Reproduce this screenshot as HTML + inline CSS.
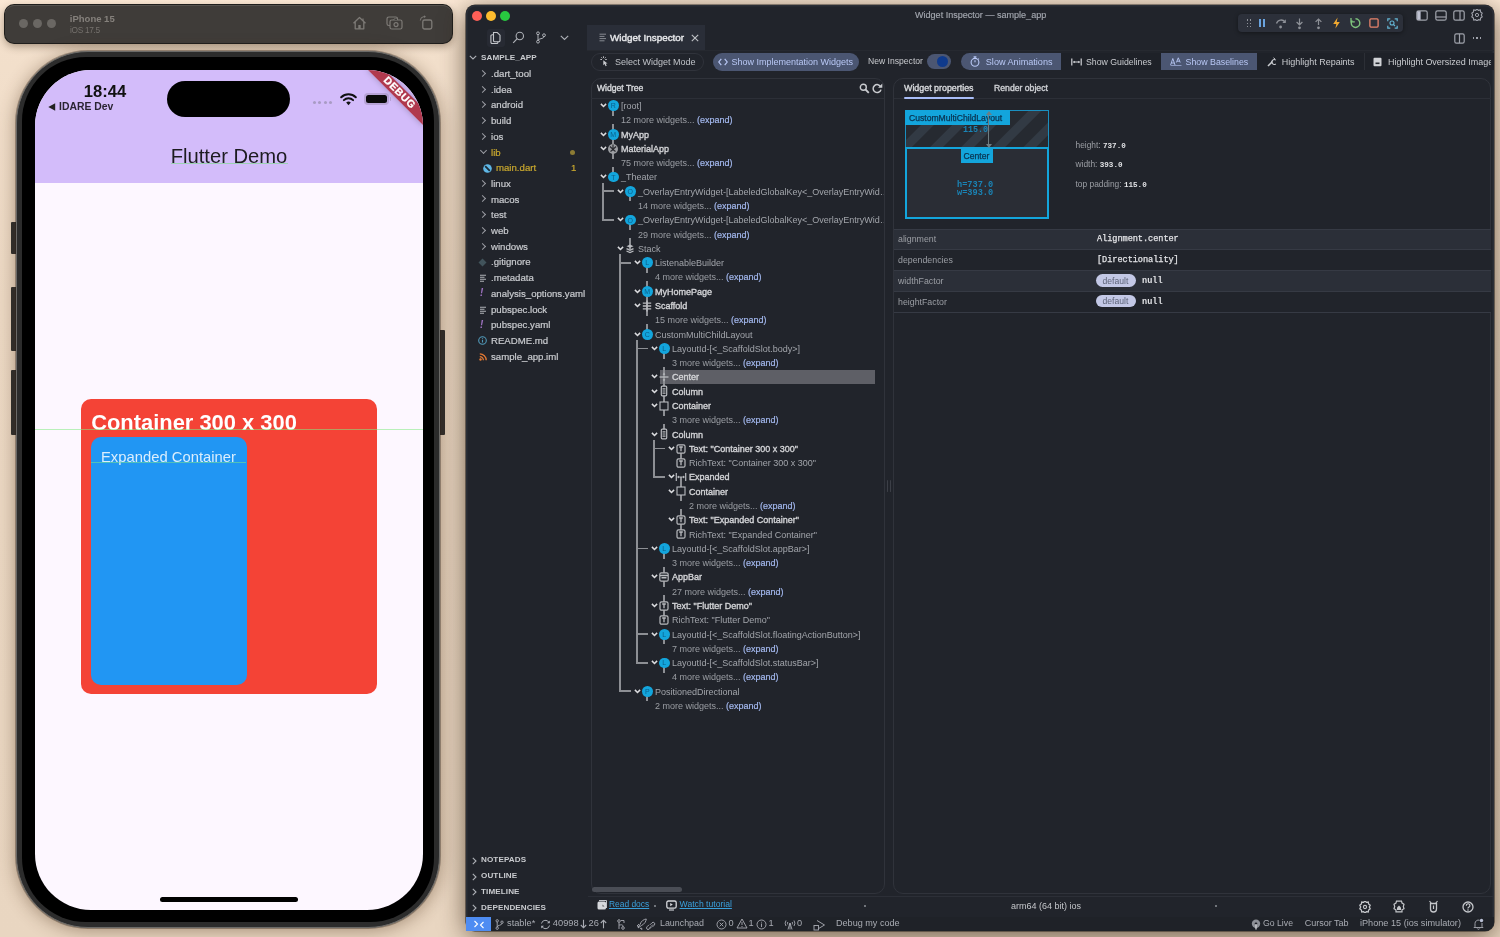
<!DOCTYPE html>
<html><head><meta charset="utf-8">
<style>
*{margin:0;padding:0;box-sizing:border-box}
html,body{width:1500px;height:937px;overflow:hidden}
body{position:relative;background:linear-gradient(180deg,#fbe8d5 0px,#f3e0cc 30px,#ecd9c4 300px,#e9d6c1 100%);font-family:"Liberation Sans",sans-serif}
.a{position:absolute}
.t{position:absolute;white-space:nowrap;line-height:1}
/* simulator */
#simbar{left:4.8px;top:4.8px;width:447.5px;height:38px;background:#3f3c39;border-radius:9px;box-shadow:0 0 0 1px #1f1e1c,inset 0 1px 0 #55524e,0 3px 9px rgba(60,40,20,.45)}
.sdot{width:9px;height:9px;border-radius:50%;background:#6a6763;top:19px}
#phone{left:16px;top:51px;width:424px;height:877px;border-radius:72px;background:#2c2c2c;border:1px solid #6b6a68;box-shadow:0 0 0 1px rgba(40,30,20,.35),0 2px 18px rgba(70,45,20,.45)}
#bezel{left:22px;top:57px;width:412px;height:865px;border-radius:64px;background:#000}
#screen{left:35px;top:69.5px;width:388px;height:840.5px;border-radius:56px;background:#fdf7ff;overflow:hidden}
.btn{background:#2e2e2e;border-radius:1px}
/* vscode */
#vs{left:466px;top:5px;width:1028px;height:926px;background:#21242b;border-radius:9px;overflow:hidden;box-shadow:inset 0 0 0 1.5px #2b2f37,0 0 0 0.6px rgba(0,0,0,.7),0 5px 26px rgba(45,28,10,.65)}
.tl{width:10px;height:10px;border-radius:50%;top:5.7px}

.vt{position:absolute;white-space:nowrap;line-height:1;color:#cfd1d5}
.pill{position:absolute;border-radius:10px}
.panel{position:absolute;border:1px solid #30333b;border-radius:10px}
.ex{font-size:9.65px;color:#c9cbcf;-webkit-text-stroke-width:0.2px}
.chev{position:absolute;width:5px;height:5px;border-right:1.2px solid #9a9da3;border-bottom:1.2px solid #9a9da3}
.sec{font-size:8.1px;font-weight:bold;color:#c9cbcf;letter-spacing:.1px}
.tr{font-size:9px}
</style></head>
<body><div id="root" style="position:absolute;left:0;top:0;width:1500px;height:937px;will-change:transform">
<!-- simulator toolbar -->
<div id="simbar" class="a">
  <div class="a sdot" style="left:14px;top:14px"></div>
  <div class="a sdot" style="left:28.3px;top:14px"></div>
  <div class="a sdot" style="left:42.5px;top:14px"></div>
  <div class="t" style="left:65px;top:9px;font-size:9.5px;font-weight:bold;color:#85817c">iPhone 15</div>
  <div class="t" style="left:65.2px;top:20.8px;font-size:8.3px;color:#75716d;letter-spacing:-0.3px">iOS 17.5</div>
</div>

<!-- phone -->
<div class="a btn" style="left:11px;top:222px;width:6px;height:32px"></div>
<div class="a btn" style="left:11px;top:287px;width:6px;height:64px"></div>
<div class="a btn" style="left:11px;top:370px;width:6px;height:65px"></div>
<div class="a btn" style="left:439px;top:330px;width:6px;height:105px"></div>
<div id="phone" class="a"></div>
<div id="bezel" class="a"></div>
<div id="screen" class="a">
  <div class="a" style="left:0;top:0;width:388px;height:113.9px;background:#d3bcfa"></div>
  <div class="t" style="left:48.7px;top:14.5px;font-size:16.6px;font-weight:bold;color:#111">18:44</div>
  <svg class="a" style="left:12.5px;top:33.3px" width="8" height="8" viewBox="0 0 8 8"><path d="M0.3 4L7.2 0.3V7.7Z" fill="#222"/></svg>
  <div class="t" style="left:24px;top:32.3px;font-size:10.4px;font-weight:bold;color:#2a2433">IDARE Dev</div>
  <div class="a" style="left:132px;top:11.8px;width:123px;height:35.6px;border-radius:18px;background:#000"></div>
  <div class="a" style="left:278px;top:31.8px;width:3.2px;height:3.2px;border-radius:50%;background:#a99bc4"></div>
  <div class="a" style="left:283.3px;top:31.8px;width:3.2px;height:3.2px;border-radius:50%;background:#a99bc4"></div>
  <div class="a" style="left:288.6px;top:31.8px;width:3.2px;height:3.2px;border-radius:50%;background:#a99bc4"></div>
  <div class="a" style="left:293.9px;top:31.8px;width:3.2px;height:3.2px;border-radius:50%;background:#a99bc4"></div>
  <svg class="a" style="left:304.5px;top:23px" width="17" height="13" viewBox="0 0 17 13"><path d="M8.5 12.2L6.2 9.6A3.3 3.3 0 0 1 10.8 9.6Z" fill="#111"/><path d="M3.9 7.1A6.5 6.5 0 0 1 13.1 7.1M1.2 4.2A10.4 10.4 0 0 1 15.8 4.2" stroke="#111" stroke-width="2" fill="none" stroke-linecap="round"/></svg>
  <div class="a" style="left:329px;top:23px;width:24.5px;height:12.5px;border-radius:4px;background:#b7a3d6"></div>
  <div class="a" style="left:331px;top:25.3px;width:20.5px;height:8px;border-radius:2.5px;background:#0a0a0a"></div>
  <div class="a" style="left:354.5px;top:27.3px;width:1.5px;height:4px;border-radius:1px;background:#b7a3d6"></div>
  <div class="t" style="left:0;top:76.4px;width:388px;text-align:center;font-size:20.2px;color:#1d1b20">Flutter Demo</div>
  <div class="a" style="left:136px;top:93.8px;width:116.5px;height:1px;background:#8fd6a3;opacity:.8"></div>
  <div class="a" style="left:45.8px;top:329.5px;width:296.2px;height:295.4px;border-radius:10px;background:#f44336"></div>
  <div class="t" style="left:56.2px;top:342.4px;font-size:21.9px;font-weight:bold;color:#fff">Container 300 x 300</div>
  <div class="a" style="left:56px;top:367.9px;width:155.8px;height:247.4px;border-radius:10px;background:#2196f3"></div>
  <div class="t" style="left:66px;top:380.6px;font-size:14.8px;color:#dbeefd">Expanded Container</div>
  <div class="a" style="left:0;top:359.5px;width:388px;height:1px;background:rgba(130,235,130,.55)"></div>
  <div class="a" style="left:56px;top:392px;width:155px;height:1px;background:rgba(130,235,130,.5)"></div>
  <div class="a" style="left:125px;top:827.8px;width:138px;height:4.6px;border-radius:3px;background:#000"></div>
  <div class="a" style="left:324.8px;top:17.8px;width:79px;height:11.8px;background:rgba(168,28,40,.82);transform:rotate(45deg);box-shadow:0 0 6px rgba(0,0,0,.25);text-align:center;color:#fff;font-size:10.4px;font-weight:bold;line-height:11.8px;letter-spacing:.6px;-webkit-text-stroke:0.3px #fff">DEBUG</div>
</div>

<!-- vscode window -->
<div id="vs" class="a">
  <div class="a tl" style="left:5.5px;background:#fe5f57"></div>
  <div class="a tl" style="left:19.5px;background:#febc2e"></div>
  <div class="a tl" style="left:33.5px;background:#28c840"></div>
</div>

<!-- title -->
<div class="vt" style="left:915px;top:10.5px;font-size:9.05px;color:#a3a7af;-webkit-text-stroke:0.15px #a3a7af">Widget Inspector — sample_app</div>
<!-- debug toolbar -->
<div class="a" style="left:1238px;top:13.5px;width:165px;height:18.5px;background:#2c303a;border-radius:4px;box-shadow:0 1px 4px rgba(0,0,0,.4)"></div>
<!-- sidebar header icons -->
<div class="a" style="left:487px;top:28.5px;width:17.5px;height:18.5px;background:#272a33;border-radius:3px"></div>
<!-- tab -->
<div class="a" style="left:587px;top:25px;width:118px;height:25.5px;background:#2a2e38"></div>
<div class="vt" style="left:610px;top:32.5px;font-size:9.9px;color:#e6e7ea;-webkit-text-stroke:0.4px #e6e7ea">Widget Inspector</div>
<svg class="a" style="left:691px;top:34px" width="8" height="8" viewBox="0 0 8 8"><path d="M0.8 0.8L7.2 7.2M7.2 0.8L0.8 7.2" stroke="#c0c2c6" stroke-width="1.1"/></svg>
<!-- line under tab bar -->
<div class="a" style="left:587px;top:50px;width:907px;height:1px;background:#262930"></div>
<!-- explorer -->
<div class="vt sec" style="left:481px;top:54px">SAMPLE_APP</div>
<!-- toolbar pills -->
<div class="pill" style="left:591px;top:52.5px;width:113px;height:18px;border:1px solid #30333b"></div>
<div class="vt" style="left:615px;top:57.8px;font-size:9px;color:#bfc2c7">Select Widget Mode</div>
<div class="pill" style="left:713px;top:52.5px;width:146px;height:18px;background:#4b5672"></div>
<div class="vt" style="left:731.5px;top:57.8px;font-size:9px;color:#b9c8f5">Show Implementation Widgets</div>
<div class="vt" style="left:868px;top:56.5px;font-size:8.6px;color:#c9cbcf">New Inspector</div>
<div class="pill" style="left:926.5px;top:54px;width:24px;height:15px;background:#4b5672;border-radius:8px"></div>
<div class="a" style="left:937px;top:56px;width:11px;height:11px;border-radius:50%;background:#0f3a8c"></div>
<div class="a" style="left:961px;top:52.5px;width:200px;height:17.5px;border-radius:9px 0 0 9px;background:#1e2128;overflow:hidden"></div>
<div class="a" style="left:961px;top:52.5px;width:100px;height:17.5px;border-radius:9px 0 0 9px;background:#4b5672"></div>
<div class="a" style="left:1160.5px;top:52.5px;width:96.5px;height:17.5px;background:#4b5672"></div>
<div class="a" style="left:1257px;top:52.5px;width:237px;height:17.5px;background:#1e2128"></div>
<div class="a" style="left:1364px;top:52.5px;width:1px;height:17.5px;background:#2c2f36"></div>
<div class="vt" style="left:985.8px;top:57.8px;font-size:9.1px;color:#b9c8f5">Slow Animations</div>
<div class="vt" style="left:1086px;top:57.8px;font-size:8.75px;color:#c9cbcf">Show Guidelines</div>
<div class="vt" style="left:1185.6px;top:57.8px;font-size:8.8px;color:#b9c8f5">Show Baselines</div>
<div class="vt" style="left:1281.8px;top:57.8px;font-size:8.97px;color:#c9cbcf">Highlight Repaints</div>
<div class="a" style="left:1380px;top:52px;width:111px;height:18px;overflow:hidden"><div class="vt" style="left:8px;top:5.8px;font-size:8.97px;color:#c9cbcf">Highlight Oversized Images</div></div>
<!-- panels -->
<div class="panel" style="left:590.5px;top:78px;width:294px;height:816px"></div>
<div class="a" style="left:591px;top:98px;width:293px;height:1px;background:#2c2f37"></div>
<div class="vt" style="left:597px;top:84px;font-size:8.6px;color:#d9dbde;-webkit-text-stroke:0.35px #d9dbde">Widget Tree</div>
<div class="panel" style="left:892.8px;top:78px;width:598.7px;height:816px"></div>
<div class="a" style="left:894px;top:98px;width:597px;height:1px;background:#2c2f37"></div>
<div class="vt" style="left:904px;top:83.5px;font-size:8.9px;color:#d9dbde;-webkit-text-stroke:0.35px #d9dbde">Widget properties</div>
<div class="a" style="left:904px;top:96.5px;width:70px;height:2px;background:#a9bdf8;border-radius:1px"></div>
<div class="vt" style="left:994px;top:83.5px;font-size:8.67px;color:#d0d2d6;-webkit-text-stroke:0.35px #d0d2d6">Render object</div>
<!-- tree -->
<div class="a" style="left:591px;top:99px;width:293px;height:795px;overflow:hidden"><div class="a" style="left:-591px;top:-99px;width:1500px;height:937px">
<div class="a" style="left:659.6px;top:369.9px;width:215.6px;height:14.3px;background:#5e5f66"></div>
<div class="a" style="left:612.4px;top:105.6px;width:1.8px;height:10.0px;background:#8d8f94"></div>
<div class="a" style="left:612.4px;top:123.7px;width:1.8px;height:10.5px;background:#8d8f94"></div>
<div class="a" style="left:612.4px;top:134.2px;width:1.8px;height:14.3px;background:#8d8f94"></div>
<div class="a" style="left:612.4px;top:148.5px;width:1.8px;height:10.0px;background:#8d8f94"></div>
<div class="a" style="left:612.4px;top:166.5px;width:1.8px;height:10.5px;background:#8d8f94"></div>
<div class="a" style="left:629.4px;top:191.3px;width:1.8px;height:10.0px;background:#8d8f94"></div>
<div class="a" style="left:629.4px;top:219.9px;width:1.8px;height:10.0px;background:#8d8f94"></div>
<div class="a" style="left:629.4px;top:238.0px;width:1.8px;height:10.5px;background:#8d8f94"></div>
<div class="a" style="left:646.4px;top:262.7px;width:1.8px;height:10.0px;background:#8d8f94"></div>
<div class="a" style="left:646.4px;top:280.8px;width:1.8px;height:10.5px;background:#8d8f94"></div>
<div class="a" style="left:646.4px;top:291.3px;width:1.8px;height:14.3px;background:#8d8f94"></div>
<div class="a" style="left:646.4px;top:305.6px;width:1.8px;height:10.0px;background:#8d8f94"></div>
<div class="a" style="left:646.4px;top:323.7px;width:1.8px;height:10.5px;background:#8d8f94"></div>
<div class="a" style="left:663.4px;top:348.5px;width:1.8px;height:10.0px;background:#8d8f94"></div>
<div class="a" style="left:663.4px;top:366.5px;width:1.8px;height:10.5px;background:#8d8f94"></div>
<div class="a" style="left:663.4px;top:377.0px;width:1.8px;height:14.3px;background:#8d8f94"></div>
<div class="a" style="left:663.4px;top:391.3px;width:1.8px;height:14.3px;background:#8d8f94"></div>
<div class="a" style="left:663.4px;top:405.6px;width:1.8px;height:10.0px;background:#8d8f94"></div>
<div class="a" style="left:663.4px;top:423.7px;width:1.8px;height:10.5px;background:#8d8f94"></div>
<div class="a" style="left:680.4px;top:448.5px;width:1.8px;height:14.3px;background:#8d8f94"></div>
<div class="a" style="left:680.4px;top:477.0px;width:1.8px;height:14.3px;background:#8d8f94"></div>
<div class="a" style="left:680.4px;top:491.3px;width:1.8px;height:10.0px;background:#8d8f94"></div>
<div class="a" style="left:680.4px;top:509.4px;width:1.8px;height:10.5px;background:#8d8f94"></div>
<div class="a" style="left:680.4px;top:519.9px;width:1.8px;height:14.3px;background:#8d8f94"></div>
<div class="a" style="left:663.4px;top:548.5px;width:1.8px;height:10.0px;background:#8d8f94"></div>
<div class="a" style="left:663.4px;top:566.6px;width:1.8px;height:10.5px;background:#8d8f94"></div>
<div class="a" style="left:663.4px;top:577.0px;width:1.8px;height:10.0px;background:#8d8f94"></div>
<div class="a" style="left:663.4px;top:595.1px;width:1.8px;height:10.5px;background:#8d8f94"></div>
<div class="a" style="left:663.4px;top:605.6px;width:1.8px;height:14.3px;background:#8d8f94"></div>
<div class="a" style="left:663.4px;top:634.2px;width:1.8px;height:10.0px;background:#8d8f94"></div>
<div class="a" style="left:663.4px;top:662.8px;width:1.8px;height:10.0px;background:#8d8f94"></div>
<div class="a" style="left:646.4px;top:691.3px;width:1.8px;height:10.0px;background:#8d8f94"></div>
<div class="a" style="left:602.3px;top:182.5px;width:1.8px;height:38.3px;background:#8d8f94"></div>
<div class="a" style="left:602.3px;top:190.4px;width:11.5px;height:1.8px;background:#8d8f94"></div>
<div class="a" style="left:602.3px;top:219.0px;width:11.5px;height:1.8px;background:#8d8f94"></div>
<div class="a" style="left:619.3px;top:254.0px;width:1.8px;height:438.3px;background:#8d8f94"></div>
<div class="a" style="left:619.3px;top:261.8px;width:11.5px;height:1.8px;background:#8d8f94"></div>
<div class="a" style="left:619.3px;top:690.4px;width:11.5px;height:1.8px;background:#8d8f94"></div>
<div class="a" style="left:636.3px;top:339.7px;width:1.8px;height:324.0px;background:#8d8f94"></div>
<div class="a" style="left:636.3px;top:347.6px;width:11.5px;height:1.8px;background:#8d8f94"></div>
<div class="a" style="left:636.3px;top:547.6px;width:11.5px;height:1.8px;background:#8d8f94"></div>
<div class="a" style="left:636.3px;top:633.3px;width:11.5px;height:1.8px;background:#8d8f94"></div>
<div class="a" style="left:636.3px;top:661.9px;width:11.5px;height:1.8px;background:#8d8f94"></div>
<div class="a" style="left:653.3px;top:439.7px;width:1.8px;height:38.3px;background:#8d8f94"></div>
<div class="a" style="left:653.3px;top:447.6px;width:11.5px;height:1.8px;background:#8d8f94"></div>
<div class="a" style="left:653.3px;top:476.1px;width:11.5px;height:1.8px;background:#8d8f94"></div>
<svg class="a" style="left:599.7px;top:103.0px" width="7" height="5" viewBox="0 0 7 5"><path d="M0.9 0.9L3.5 3.5L6.1 0.9" stroke="#dcdde0" stroke-width="1.5" fill="none"/></svg>
<div class="a" style="left:608.2px;top:100.3px;width:10.8px;height:10.8px;border-radius:50%;background:#13a5dc"></div><div class="vt" style="left:608.1px;top:102.2px;width:10.4px;text-align:center;font-size:7px;color:#0b5f8a">R</div>
<div class="vt tr" style="left:621.0px;top:102.0px;color:#a2a5ab;font-weight:normal">[root]</div>
<div class="vt tr" style="left:621.0px;top:116.3px;color:#9b9ea4">12 more widgets... <span style="color:#a3b8ee;-webkit-text-stroke:0.2px #a3b8ee">(expand)</span></div>
<svg class="a" style="left:599.7px;top:131.6px" width="7" height="5" viewBox="0 0 7 5"><path d="M0.9 0.9L3.5 3.5L6.1 0.9" stroke="#dcdde0" stroke-width="1.5" fill="none"/></svg>
<div class="a" style="left:608.2px;top:128.9px;width:10.8px;height:10.8px;border-radius:50%;background:#13a5dc"></div><div class="vt" style="left:608.1px;top:130.8px;width:10.4px;text-align:center;font-size:7px;color:#0b5f8a">M</div>
<div class="vt tr" style="left:621.0px;top:130.6px;color:#d3d4d7;font-weight:normal;-webkit-text-stroke:0.35px #d3d4d7">MyApp</div>
<svg class="a" style="left:599.7px;top:145.9px" width="7" height="5" viewBox="0 0 7 5"><path d="M0.9 0.9L3.5 3.5L6.1 0.9" stroke="#dcdde0" stroke-width="1.5" fill="none"/></svg>
<svg class="a" style="left:607.3px;top:142.5px" width="12" height="12" viewBox="0 0 12 12"><circle cx="6" cy="6" r="5" fill="#9c9ea2"/><path d="M6 1.5V5M3 3.5L5 5.5M9 3.5L7 5.5M3.5 8.5L6 6.5L8.5 8.5" stroke="#2a2c31" stroke-width="1.2" fill="none"/><circle cx="6" cy="6" r="1.2" fill="#2a2c31"/></svg>
<div class="vt tr" style="left:621.0px;top:144.9px;color:#d3d4d7;font-weight:normal;-webkit-text-stroke:0.35px #d3d4d7">MaterialApp</div>
<div class="vt tr" style="left:621.0px;top:159.1px;color:#9b9ea4">75 more widgets... <span style="color:#a3b8ee;-webkit-text-stroke:0.2px #a3b8ee">(expand)</span></div>
<svg class="a" style="left:599.7px;top:174.4px" width="7" height="5" viewBox="0 0 7 5"><path d="M0.9 0.9L3.5 3.5L6.1 0.9" stroke="#dcdde0" stroke-width="1.5" fill="none"/></svg>
<div class="a" style="left:608.2px;top:171.7px;width:10.8px;height:10.8px;border-radius:50%;background:#13a5dc"></div><div class="vt" style="left:608.1px;top:173.6px;width:10.4px;text-align:center;font-size:7px;color:#0b5f8a">T</div>
<div class="vt tr" style="left:621.0px;top:173.4px;color:#a2a5ab;font-weight:normal">_Theater</div>
<svg class="a" style="left:616.7px;top:188.7px" width="7" height="5" viewBox="0 0 7 5"><path d="M0.9 0.9L3.5 3.5L6.1 0.9" stroke="#dcdde0" stroke-width="1.5" fill="none"/></svg>
<div class="a" style="left:625.2px;top:186.0px;width:10.8px;height:10.8px;border-radius:50%;background:#13a5dc"></div><div class="vt" style="left:625.1px;top:187.9px;width:10.4px;text-align:center;font-size:7px;color:#0b5f8a">O</div>
<div class="vt tr" style="left:638.0px;top:187.7px;color:#a2a5ab;font-weight:normal">_OverlayEntryWidget-[LabeledGlobalKey&lt;_OverlayEntryWid…</div>
<div class="vt tr" style="left:638.0px;top:202.0px;color:#9b9ea4">14 more widgets... <span style="color:#a3b8ee;-webkit-text-stroke:0.2px #a3b8ee">(expand)</span></div>
<svg class="a" style="left:616.7px;top:217.3px" width="7" height="5" viewBox="0 0 7 5"><path d="M0.9 0.9L3.5 3.5L6.1 0.9" stroke="#dcdde0" stroke-width="1.5" fill="none"/></svg>
<div class="a" style="left:625.2px;top:214.6px;width:10.8px;height:10.8px;border-radius:50%;background:#13a5dc"></div><div class="vt" style="left:625.1px;top:216.5px;width:10.4px;text-align:center;font-size:7px;color:#0b5f8a">O</div>
<div class="vt tr" style="left:638.0px;top:216.3px;color:#a2a5ab;font-weight:normal">_OverlayEntryWidget-[LabeledGlobalKey&lt;_OverlayEntryWid…</div>
<div class="vt tr" style="left:638.0px;top:230.6px;color:#9b9ea4">29 more widgets... <span style="color:#a3b8ee;-webkit-text-stroke:0.2px #a3b8ee">(expand)</span></div>
<svg class="a" style="left:616.7px;top:245.9px" width="7" height="5" viewBox="0 0 7 5"><path d="M0.9 0.9L3.5 3.5L6.1 0.9" stroke="#dcdde0" stroke-width="1.5" fill="none"/></svg>
<svg class="a" style="left:624.3px;top:242.5px" width="12" height="12" viewBox="0 0 12 12"><path d="M2.5 3.2L6 1.6L9.5 3.2L6 4.8Z" fill="#b9bbbf"/><path d="M2.5 5.6L6 7.2L9.5 5.6M2.5 8L6 9.6L9.5 8" stroke="#b9bbbf" stroke-width="1.3" fill="none"/></svg>
<div class="vt tr" style="left:638.0px;top:244.9px;color:#a2a5ab;font-weight:normal">Stack</div>
<svg class="a" style="left:633.7px;top:260.1px" width="7" height="5" viewBox="0 0 7 5"><path d="M0.9 0.9L3.5 3.5L6.1 0.9" stroke="#dcdde0" stroke-width="1.5" fill="none"/></svg>
<div class="a" style="left:642.2px;top:257.4px;width:10.8px;height:10.8px;border-radius:50%;background:#13a5dc"></div><div class="vt" style="left:642.1px;top:259.3px;width:10.4px;text-align:center;font-size:7px;color:#0b5f8a">L</div>
<div class="vt tr" style="left:655.0px;top:259.1px;color:#a2a5ab;font-weight:normal">ListenableBuilder</div>
<div class="vt tr" style="left:655.0px;top:273.4px;color:#9b9ea4">4 more widgets... <span style="color:#a3b8ee;-webkit-text-stroke:0.2px #a3b8ee">(expand)</span></div>
<svg class="a" style="left:633.7px;top:288.7px" width="7" height="5" viewBox="0 0 7 5"><path d="M0.9 0.9L3.5 3.5L6.1 0.9" stroke="#dcdde0" stroke-width="1.5" fill="none"/></svg>
<div class="a" style="left:642.2px;top:286.0px;width:10.8px;height:10.8px;border-radius:50%;background:#13a5dc"></div><div class="vt" style="left:642.1px;top:287.9px;width:10.4px;text-align:center;font-size:7px;color:#0b5f8a">M</div>
<div class="vt tr" style="left:655.0px;top:287.7px;color:#d3d4d7;font-weight:normal;-webkit-text-stroke:0.35px #d3d4d7">MyHomePage</div>
<svg class="a" style="left:633.7px;top:303.0px" width="7" height="5" viewBox="0 0 7 5"><path d="M0.9 0.9L3.5 3.5L6.1 0.9" stroke="#dcdde0" stroke-width="1.5" fill="none"/></svg>
<svg class="a" style="left:641.3px;top:299.6px" width="12" height="12" viewBox="0 0 12 12"><path d="M6 0.5V11.5M1.8 3.2H10.2M1.8 6H10.2M1.8 8.8H10.2" stroke="#b9bbbf" stroke-width="1.3"/></svg>
<div class="vt tr" style="left:655.0px;top:302.0px;color:#d3d4d7;font-weight:normal;-webkit-text-stroke:0.35px #d3d4d7">Scaffold</div>
<div class="vt tr" style="left:655.0px;top:316.3px;color:#9b9ea4">15 more widgets... <span style="color:#a3b8ee;-webkit-text-stroke:0.2px #a3b8ee">(expand)</span></div>
<svg class="a" style="left:633.7px;top:331.6px" width="7" height="5" viewBox="0 0 7 5"><path d="M0.9 0.9L3.5 3.5L6.1 0.9" stroke="#dcdde0" stroke-width="1.5" fill="none"/></svg>
<div class="a" style="left:642.2px;top:328.9px;width:10.8px;height:10.8px;border-radius:50%;background:#13a5dc"></div><div class="vt" style="left:642.1px;top:330.8px;width:10.4px;text-align:center;font-size:7px;color:#0b5f8a">C</div>
<div class="vt tr" style="left:655.0px;top:330.6px;color:#a2a5ab;font-weight:normal">CustomMultiChildLayout</div>
<svg class="a" style="left:650.7px;top:345.9px" width="7" height="5" viewBox="0 0 7 5"><path d="M0.9 0.9L3.5 3.5L6.1 0.9" stroke="#dcdde0" stroke-width="1.5" fill="none"/></svg>
<div class="a" style="left:659.2px;top:343.2px;width:10.8px;height:10.8px;border-radius:50%;background:#13a5dc"></div><div class="vt" style="left:659.1px;top:345.1px;width:10.4px;text-align:center;font-size:7px;color:#0b5f8a">L</div>
<div class="vt tr" style="left:672.0px;top:344.9px;color:#a2a5ab;font-weight:normal">LayoutId-[&lt;_ScaffoldSlot.body&gt;]</div>
<div class="vt tr" style="left:672.0px;top:359.1px;color:#9b9ea4">3 more widgets... <span style="color:#a3b8ee;-webkit-text-stroke:0.2px #a3b8ee">(expand)</span></div>
<svg class="a" style="left:650.7px;top:374.4px" width="7" height="5" viewBox="0 0 7 5"><path d="M0.9 0.9L3.5 3.5L6.1 0.9" stroke="#dcdde0" stroke-width="1.5" fill="none"/></svg>
<svg class="a" style="left:658.3px;top:371.0px" width="12" height="12" viewBox="0 0 12 12"><path d="M1.5 6H10.5" stroke="#b9bbbf" stroke-width="1.3"/><path d="M6 1.5L7.3 3.8H4.7Z M6 10.5L7.3 8.2H4.7Z" fill="#b9bbbf"/></svg>
<div class="vt tr" style="left:672.0px;top:373.4px;color:#d3d4d7;font-weight:normal;-webkit-text-stroke:0.35px #d3d4d7">Center</div>
<svg class="a" style="left:650.7px;top:388.7px" width="7" height="5" viewBox="0 0 7 5"><path d="M0.9 0.9L3.5 3.5L6.1 0.9" stroke="#dcdde0" stroke-width="1.5" fill="none"/></svg>
<svg class="a" style="left:658.3px;top:385.3px" width="12" height="12" viewBox="0 0 12 12"><rect x="3.3" y="1.2" width="5.4" height="9.6" rx="1" stroke="#b9bbbf" stroke-width="1.2" fill="#21242b"/><path d="M4.5 3.8H7.5M4.5 6H7.5M4.5 8.2H7.5" stroke="#b9bbbf" stroke-width="1.2"/></svg>
<div class="vt tr" style="left:672.0px;top:387.7px;color:#d3d4d7;font-weight:normal;-webkit-text-stroke:0.35px #d3d4d7">Column</div>
<svg class="a" style="left:650.7px;top:403.0px" width="7" height="5" viewBox="0 0 7 5"><path d="M0.9 0.9L3.5 3.5L6.1 0.9" stroke="#dcdde0" stroke-width="1.5" fill="none"/></svg>
<svg class="a" style="left:658.3px;top:399.6px" width="12" height="12" viewBox="0 0 12 12"><rect x="2" y="2" width="8" height="8" stroke="#b9bbbf" stroke-width="1.1" fill="#21242b"/></svg>
<div class="vt tr" style="left:672.0px;top:402.0px;color:#d3d4d7;font-weight:normal;-webkit-text-stroke:0.35px #d3d4d7">Container</div>
<div class="vt tr" style="left:672.0px;top:416.3px;color:#9b9ea4">3 more widgets... <span style="color:#a3b8ee;-webkit-text-stroke:0.2px #a3b8ee">(expand)</span></div>
<svg class="a" style="left:650.7px;top:431.6px" width="7" height="5" viewBox="0 0 7 5"><path d="M0.9 0.9L3.5 3.5L6.1 0.9" stroke="#dcdde0" stroke-width="1.5" fill="none"/></svg>
<svg class="a" style="left:658.3px;top:428.2px" width="12" height="12" viewBox="0 0 12 12"><rect x="3.3" y="1.2" width="5.4" height="9.6" rx="1" stroke="#b9bbbf" stroke-width="1.2" fill="#21242b"/><path d="M4.5 3.8H7.5M4.5 6H7.5M4.5 8.2H7.5" stroke="#b9bbbf" stroke-width="1.2"/></svg>
<div class="vt tr" style="left:672.0px;top:430.6px;color:#d3d4d7;font-weight:normal;-webkit-text-stroke:0.35px #d3d4d7">Column</div>
<svg class="a" style="left:667.7px;top:445.9px" width="7" height="5" viewBox="0 0 7 5"><path d="M0.9 0.9L3.5 3.5L6.1 0.9" stroke="#dcdde0" stroke-width="1.5" fill="none"/></svg>
<svg class="a" style="left:675.3px;top:442.5px" width="12" height="12" viewBox="0 0 12 12"><rect x="2" y="1.8" width="8" height="8.4" rx="1.5" stroke="#b9bbbf" stroke-width="1.2" fill="#21242b"/><path d="M4.2 4H7.8M6 4V8.3" stroke="#b9bbbf" stroke-width="1.3"/></svg>
<div class="vt tr" style="left:689.0px;top:444.9px;color:#d3d4d7;font-weight:normal;-webkit-text-stroke:0.35px #d3d4d7">Text: "Container 300 x 300"</div>
<svg class="a" style="left:675.3px;top:456.8px" width="12" height="12" viewBox="0 0 12 12"><rect x="2" y="1.8" width="8" height="8.4" rx="1.5" stroke="#b9bbbf" stroke-width="1.2" fill="#21242b"/><path d="M4.2 4H7.8M6 4V8.3" stroke="#b9bbbf" stroke-width="1.3"/></svg>
<div class="vt tr" style="left:689.0px;top:459.1px;color:#a2a5ab;font-weight:normal">RichText: "Container 300 x 300"</div>
<svg class="a" style="left:667.7px;top:474.4px" width="7" height="5" viewBox="0 0 7 5"><path d="M0.9 0.9L3.5 3.5L6.1 0.9" stroke="#dcdde0" stroke-width="1.5" fill="none"/></svg>
<svg class="a" style="left:675.3px;top:471.0px" width="12" height="12" viewBox="0 0 12 12"><path d="M1.3 2V10M10.7 2V10M2.5 6H9.5" stroke="#b9bbbf" stroke-width="1.2"/><path d="M2.3 6L4 4.6V7.4Z M9.7 6L8 4.6V7.4Z" fill="#b9bbbf"/></svg>
<div class="vt tr" style="left:689.0px;top:473.4px;color:#d3d4d7;font-weight:normal;-webkit-text-stroke:0.35px #d3d4d7">Expanded</div>
<svg class="a" style="left:667.7px;top:488.7px" width="7" height="5" viewBox="0 0 7 5"><path d="M0.9 0.9L3.5 3.5L6.1 0.9" stroke="#dcdde0" stroke-width="1.5" fill="none"/></svg>
<svg class="a" style="left:675.3px;top:485.3px" width="12" height="12" viewBox="0 0 12 12"><rect x="2" y="2" width="8" height="8" stroke="#b9bbbf" stroke-width="1.1" fill="#21242b"/></svg>
<div class="vt tr" style="left:689.0px;top:487.7px;color:#d3d4d7;font-weight:normal;-webkit-text-stroke:0.35px #d3d4d7">Container</div>
<div class="vt tr" style="left:689.0px;top:502.0px;color:#9b9ea4">2 more widgets... <span style="color:#a3b8ee;-webkit-text-stroke:0.2px #a3b8ee">(expand)</span></div>
<svg class="a" style="left:667.7px;top:517.3px" width="7" height="5" viewBox="0 0 7 5"><path d="M0.9 0.9L3.5 3.5L6.1 0.9" stroke="#dcdde0" stroke-width="1.5" fill="none"/></svg>
<svg class="a" style="left:675.3px;top:513.9px" width="12" height="12" viewBox="0 0 12 12"><rect x="2" y="1.8" width="8" height="8.4" rx="1.5" stroke="#b9bbbf" stroke-width="1.2" fill="#21242b"/><path d="M4.2 4H7.8M6 4V8.3" stroke="#b9bbbf" stroke-width="1.3"/></svg>
<div class="vt tr" style="left:689.0px;top:516.3px;color:#d3d4d7;font-weight:normal;-webkit-text-stroke:0.35px #d3d4d7">Text: "Expanded Container"</div>
<svg class="a" style="left:675.3px;top:528.2px" width="12" height="12" viewBox="0 0 12 12"><rect x="2" y="1.8" width="8" height="8.4" rx="1.5" stroke="#b9bbbf" stroke-width="1.2" fill="#21242b"/><path d="M4.2 4H7.8M6 4V8.3" stroke="#b9bbbf" stroke-width="1.3"/></svg>
<div class="vt tr" style="left:689.0px;top:530.6px;color:#a2a5ab;font-weight:normal">RichText: "Expanded Container"</div>
<svg class="a" style="left:650.7px;top:545.9px" width="7" height="5" viewBox="0 0 7 5"><path d="M0.9 0.9L3.5 3.5L6.1 0.9" stroke="#dcdde0" stroke-width="1.5" fill="none"/></svg>
<div class="a" style="left:659.2px;top:543.2px;width:10.8px;height:10.8px;border-radius:50%;background:#13a5dc"></div><div class="vt" style="left:659.1px;top:545.1px;width:10.4px;text-align:center;font-size:7px;color:#0b5f8a">L</div>
<div class="vt tr" style="left:672.0px;top:544.9px;color:#a2a5ab;font-weight:normal">LayoutId-[&lt;_ScaffoldSlot.appBar&gt;]</div>
<div class="vt tr" style="left:672.0px;top:559.2px;color:#9b9ea4">3 more widgets... <span style="color:#a3b8ee;-webkit-text-stroke:0.2px #a3b8ee">(expand)</span></div>
<svg class="a" style="left:650.7px;top:574.4px" width="7" height="5" viewBox="0 0 7 5"><path d="M0.9 0.9L3.5 3.5L6.1 0.9" stroke="#dcdde0" stroke-width="1.5" fill="none"/></svg>
<svg class="a" style="left:658.3px;top:571.0px" width="12" height="12" viewBox="0 0 12 12"><rect x="1.8" y="1.8" width="8.4" height="8.4" rx="1.5" stroke="#b9bbbf" stroke-width="1.2" fill="#21242b"/><path d="M2 4.5H10M3.5 6.8H8.5" stroke="#b9bbbf" stroke-width="1.4"/></svg>
<div class="vt tr" style="left:672.0px;top:573.4px;color:#d3d4d7;font-weight:normal;-webkit-text-stroke:0.35px #d3d4d7">AppBar</div>
<div class="vt tr" style="left:672.0px;top:587.7px;color:#9b9ea4">27 more widgets... <span style="color:#a3b8ee;-webkit-text-stroke:0.2px #a3b8ee">(expand)</span></div>
<svg class="a" style="left:650.7px;top:603.0px" width="7" height="5" viewBox="0 0 7 5"><path d="M0.9 0.9L3.5 3.5L6.1 0.9" stroke="#dcdde0" stroke-width="1.5" fill="none"/></svg>
<svg class="a" style="left:658.3px;top:599.6px" width="12" height="12" viewBox="0 0 12 12"><rect x="2" y="1.8" width="8" height="8.4" rx="1.5" stroke="#b9bbbf" stroke-width="1.2" fill="#21242b"/><path d="M4.2 4H7.8M6 4V8.3" stroke="#b9bbbf" stroke-width="1.3"/></svg>
<div class="vt tr" style="left:672.0px;top:602.0px;color:#d3d4d7;font-weight:normal;-webkit-text-stroke:0.35px #d3d4d7">Text: "Flutter Demo"</div>
<svg class="a" style="left:658.3px;top:613.9px" width="12" height="12" viewBox="0 0 12 12"><rect x="2" y="1.8" width="8" height="8.4" rx="1.5" stroke="#b9bbbf" stroke-width="1.2" fill="#21242b"/><path d="M4.2 4H7.8M6 4V8.3" stroke="#b9bbbf" stroke-width="1.3"/></svg>
<div class="vt tr" style="left:672.0px;top:616.3px;color:#a2a5ab;font-weight:normal">RichText: "Flutter Demo"</div>
<svg class="a" style="left:650.7px;top:631.6px" width="7" height="5" viewBox="0 0 7 5"><path d="M0.9 0.9L3.5 3.5L6.1 0.9" stroke="#dcdde0" stroke-width="1.5" fill="none"/></svg>
<div class="a" style="left:659.2px;top:628.9px;width:10.8px;height:10.8px;border-radius:50%;background:#13a5dc"></div><div class="vt" style="left:659.1px;top:630.8px;width:10.4px;text-align:center;font-size:7px;color:#0b5f8a">L</div>
<div class="vt tr" style="left:672.0px;top:630.6px;color:#a2a5ab;font-weight:normal">LayoutId-[&lt;_ScaffoldSlot.floatingActionButton&gt;]</div>
<div class="vt tr" style="left:672.0px;top:644.9px;color:#9b9ea4">7 more widgets... <span style="color:#a3b8ee;-webkit-text-stroke:0.2px #a3b8ee">(expand)</span></div>
<svg class="a" style="left:650.7px;top:660.2px" width="7" height="5" viewBox="0 0 7 5"><path d="M0.9 0.9L3.5 3.5L6.1 0.9" stroke="#dcdde0" stroke-width="1.5" fill="none"/></svg>
<div class="a" style="left:659.2px;top:657.5px;width:10.8px;height:10.8px;border-radius:50%;background:#13a5dc"></div><div class="vt" style="left:659.1px;top:659.4px;width:10.4px;text-align:center;font-size:7px;color:#0b5f8a">L</div>
<div class="vt tr" style="left:672.0px;top:659.2px;color:#a2a5ab;font-weight:normal">LayoutId-[&lt;_ScaffoldSlot.statusBar&gt;]</div>
<div class="vt tr" style="left:672.0px;top:673.4px;color:#9b9ea4">4 more widgets... <span style="color:#a3b8ee;-webkit-text-stroke:0.2px #a3b8ee">(expand)</span></div>
<svg class="a" style="left:633.7px;top:688.7px" width="7" height="5" viewBox="0 0 7 5"><path d="M0.9 0.9L3.5 3.5L6.1 0.9" stroke="#dcdde0" stroke-width="1.5" fill="none"/></svg>
<div class="a" style="left:642.2px;top:686.0px;width:10.8px;height:10.8px;border-radius:50%;background:#13a5dc"></div><div class="vt" style="left:642.1px;top:687.9px;width:10.4px;text-align:center;font-size:7px;color:#0b5f8a">P</div>
<div class="vt tr" style="left:655.0px;top:687.7px;color:#a2a5ab;font-weight:normal">PositionedDirectional</div>
<div class="vt tr" style="left:655.0px;top:702.0px;color:#9b9ea4">2 more widgets... <span style="color:#a3b8ee;-webkit-text-stroke:0.2px #a3b8ee">(expand)</span></div>
</div></div>
<!-- props -->
<div class="a" style="left:905px;top:110px;width:144px;height:109px;background:#23262d"></div>
<svg class="a" style="left:905px;top:110px" width="144" height="38" viewBox="0 0 144 38">
 <defs><pattern id="stp" width="22" height="22" patternUnits="userSpaceOnUse" patternTransform="rotate(45)"><rect width="22" height="22" fill="#262a31"/><rect width="9" height="22" fill="#323a44"/></pattern></defs>
 <rect x="0.5" y="0.5" width="143" height="37" fill="url(#stp)" stroke="#1a8fc0" stroke-width="1"/>
</svg>
<div class="a" style="left:905px;top:147px;width:144px;height:72px;border:2px solid #13a5dc;background:#2a2d35"></div>
<div class="a" style="left:905px;top:110px;width:104.5px;height:14.7px;background:#13a5dc"></div>
<div class="vt" style="left:909px;top:113.5px;font-size:8.6px;color:#0a3350;-webkit-text-stroke:0.25px #0a3350">CustomMultiChildLayout</div>
<div class="vt" style="left:963px;top:126px;font-size:8.4px;color:#1a84b6;font-weight:bold;font-family:'Liberation Mono',monospace">115.0</div>
<div class="a" style="left:988px;top:112px;width:1.2px;height:35px;background:#6f7d82"></div>
<svg class="a" style="left:984.6px;top:110px" width="8" height="39" viewBox="0 0 8 39"><path d="M4 1L1 5H7Z M4 38L1 34H7Z" fill="#6f7d82"/></svg>
<div class="a" style="left:960.7px;top:148px;width:32.3px;height:14.7px;background:#13a5dc"></div>
<div class="vt" style="left:963.5px;top:151.5px;font-size:8.6px;color:#0a3350;-webkit-text-stroke:0.25px #0a3350">Center</div>
<div class="vt" style="left:957px;top:180.5px;font-size:8.6px;color:#1a84b6;font-weight:bold;font-family:'Liberation Mono',monospace;text-align:center;line-height:8.8px">h=737.0<br>w=393.0</div>

<div class="vt" style="left:1075.5px;top:140.7px;font-size:8.4px;color:#9c9fa5">height: <span style="font-family:'Liberation Mono',monospace;font-size:7.6px;color:#e2e3e6;font-weight:bold">737.0</span></div>
<div class="vt" style="left:1075.5px;top:160.3px;font-size:8.4px;color:#9c9fa5">width: <span style="font-family:'Liberation Mono',monospace;font-size:7.6px;color:#e2e3e6;font-weight:bold">393.0</span></div>
<div class="vt" style="left:1075.5px;top:179.5px;font-size:8.4px;color:#9c9fa5">top padding: <span style="font-family:'Liberation Mono',monospace;font-size:7.6px;color:#e2e3e6;font-weight:bold">115.0</span></div>
<div class="a" style="left:894px;top:228.5px;width:597px;height:20.5px;background:#2b2f38;border-top:1px solid #363a44"></div>
<div class="vt" style="left:898px;top:235.1px;font-size:8.8px;color:#9c9fa5">alignment</div>
<div class="vt" style="left:1097px;top:235.3px;font-size:8.6px;color:#e2e3e6;font-family:'Liberation Mono',monospace;letter-spacing:-0.05px;-webkit-text-stroke:0.25px #e2e3e6">Alignment.center</div>
<div class="a" style="left:894px;top:249px;width:597px;height:21px;background:#21242b;border-top:1px solid #363a44"></div>
<div class="vt" style="left:898px;top:255.8px;font-size:8.8px;color:#9c9fa5">dependencies</div>
<div class="vt" style="left:1097px;top:256.1px;font-size:8.6px;color:#e2e3e6;font-family:'Liberation Mono',monospace;letter-spacing:-0.05px;-webkit-text-stroke:0.25px #e2e3e6">[Directionality]</div>
<div class="a" style="left:894px;top:270px;width:597px;height:21px;background:#2b2f38;border-top:1px solid #363a44"></div>
<div class="vt" style="left:898px;top:276.8px;font-size:8.8px;color:#9c9fa5">widthFactor</div>
<div class="a" style="left:1096.4px;top:274.2px;width:40px;height:12.6px;border-radius:7px;background:#c3c8e6"></div>
<div class="vt" style="left:1102.5px;top:276.6px;font-size:8.6px;color:#5d6378">default</div>
<div class="vt" style="left:1142px;top:277.2px;font-size:8.6px;color:#e2e3e6;font-family:'Liberation Mono',monospace;font-weight:bold">null</div>
<div class="a" style="left:894px;top:291px;width:597px;height:20.5px;background:#21242b;border-top:1px solid #363a44"></div>
<div class="vt" style="left:898px;top:297.6px;font-size:8.8px;color:#9c9fa5">heightFactor</div>
<div class="a" style="left:1096.4px;top:294.9px;width:40px;height:12.6px;border-radius:7px;background:#c3c8e6"></div>
<div class="vt" style="left:1102.5px;top:297.4px;font-size:8.6px;color:#5d6378">default</div>
<div class="vt" style="left:1142px;top:297.9px;font-size:8.6px;color:#e2e3e6;font-family:'Liberation Mono',monospace;font-weight:bold">null</div>
<div class="a" style="left:894px;top:311.5px;width:597px;height:1px;background:#363a44"></div>
<!-- footer -->
<div class="a" style="left:588px;top:896px;width:906px;height:1px;background:#2c2f37"></div>
<div class="a" style="left:591.5px;top:886.5px;width:90px;height:5.5px;background:#4a4d55;border-radius:3px"></div>
<div class="vt" style="left:609px;top:900px;font-size:8.41px;color:#3aa0dc;text-decoration:underline">Read docs</div>
<div class="vt" style="left:679.6px;top:900px;font-size:8.62px;color:#3aa0dc;text-decoration:underline">Watch tutorial</div>
<div class="vt" style="left:1011px;top:902.3px;font-size:9px;color:#c5c7cb">arm64 (64 bit) ios</div>
<!-- status bar -->
<div class="a" style="left:466px;top:916.5px;width:1028px;height:14.5px;background:#1f2228;border-radius:0 0 9px 9px"></div>
<div class="a" style="left:466px;top:916.5px;width:24.5px;height:14.5px;background:#4e8cf2"></div>
<!-- explorer items -->
<div class="chev" style="left:479.5px;top:70.8px;transform:rotate(-45deg)"></div>
<div class="vt ex" style="left:491px;top:69.0px">.dart_tool</div>
<div class="chev" style="left:479.5px;top:86.5px;transform:rotate(-45deg)"></div>
<div class="vt ex" style="left:491px;top:84.7px">.idea</div>
<div class="chev" style="left:479.5px;top:102.2px;transform:rotate(-45deg)"></div>
<div class="vt ex" style="left:491px;top:100.4px">android</div>
<div class="chev" style="left:479.5px;top:117.9px;transform:rotate(-45deg)"></div>
<div class="vt ex" style="left:491px;top:116.1px">build</div>
<div class="chev" style="left:479.5px;top:133.6px;transform:rotate(-45deg)"></div>
<div class="vt ex" style="left:491px;top:131.8px">ios</div>
<div class="chev" style="left:480.5px;top:148.3px;transform:rotate(45deg)"></div>
<div class="vt ex" style="left:491px;top:147.5px;color:#c9a82e">lib</div>
<div class="a" style="left:569.5px;top:149.7px;width:5.5px;height:5.5px;border-radius:50%;background:#8c7b34"></div>
<svg class="a" style="left:483px;top:163.7px" width="9" height="9" viewBox="0 0 9 9"><circle cx="4.5" cy="4.5" r="4.3" fill="#5fb7e6"/><path d="M2.2 2.2 L6.8 6.8" stroke="#1a2a35" stroke-width="1.8"/></svg>
<div class="vt ex" style="left:496px;top:163.2px;color:#c9a82e">main.dart</div>
<div class="vt ex" style="left:571px;top:163.2px;color:#c9a82e">1</div>
<div class="chev" style="left:479.5px;top:180.7px;transform:rotate(-45deg)"></div>
<div class="vt ex" style="left:491px;top:178.9px">linux</div>
<div class="chev" style="left:479.5px;top:196.4px;transform:rotate(-45deg)"></div>
<div class="vt ex" style="left:491px;top:194.6px">macos</div>
<div class="chev" style="left:479.5px;top:212.1px;transform:rotate(-45deg)"></div>
<div class="vt ex" style="left:491px;top:210.3px">test</div>
<div class="chev" style="left:479.5px;top:227.8px;transform:rotate(-45deg)"></div>
<div class="vt ex" style="left:491px;top:226.0px">web</div>
<div class="chev" style="left:479.5px;top:243.5px;transform:rotate(-45deg)"></div>
<div class="vt ex" style="left:491px;top:241.7px">windows</div>
<svg class="a" style="left:478px;top:257.9px" width="9" height="9" viewBox="0 0 9 9"><path d="M4.5 0.5 L8.5 4.5 L4.5 8.5 L0.5 4.5Z" fill="#41535b"/></svg>
<div class="vt ex" style="left:491px;top:257.4px">.gitignore</div>
<svg class="a" style="left:478.5px;top:274.1px" width="8" height="8" viewBox="0 0 8 8"><path d="M1 1.2H7M1 3.2H5.5M1 5.2H7M1 7.2H5" stroke="#aeb1b6" stroke-width="1.1"/></svg>
<div class="vt ex" style="left:491px;top:273.1px">.metadata</div>
<div class="vt" style="left:480px;top:288.3px;font-size:10px;font-style:italic;font-weight:bold;color:#a074c4">!</div>
<div class="vt ex" style="left:491px;top:288.8px">analysis_options.yaml</div>
<svg class="a" style="left:478.5px;top:305.5px" width="8" height="8" viewBox="0 0 8 8"><path d="M1 1.2H7M1 3.2H5.5M1 5.2H7M1 7.2H5" stroke="#aeb1b6" stroke-width="1.1"/></svg>
<div class="vt ex" style="left:491px;top:304.5px">pubspec.lock</div>
<div class="vt" style="left:480px;top:319.7px;font-size:10px;font-style:italic;font-weight:bold;color:#a074c4">!</div>
<div class="vt ex" style="left:491px;top:320.2px">pubspec.yaml</div>
<svg class="a" style="left:477.5px;top:336.4px" width="9" height="9" viewBox="0 0 9 9"><circle cx="4.5" cy="4.5" r="3.8" fill="none" stroke="#519aba" stroke-width="1.1"/><path d="M4.5 3.8V6.6M4.5 2.2V3" stroke="#519aba" stroke-width="1.1"/></svg>
<div class="vt ex" style="left:491px;top:335.9px">README.md</div>
<svg class="a" style="left:478.5px;top:352.6px" width="8" height="8" viewBox="0 0 8 8"><circle cx="1.5" cy="6.5" r="1.2" fill="#e37933"/><path d="M0.8 3.6A3.6 3.6 0 0 1 4.4 7.2M0.8 0.8A6.4 6.4 0 0 1 7.2 7.2" fill="none" stroke="#e37933" stroke-width="1.3"/></svg>
<div class="vt ex" style="left:491px;top:351.6px">sample_app.iml</div>
<!-- sidebar sections -->
<div class="vt sec" style="left:481px;top:856px">NOTEPADS</div>
<div class="vt sec" style="left:481px;top:872px">OUTLINE</div>
<div class="vt sec" style="left:481px;top:888px">TIMELINE</div>
<div class="vt sec" style="left:481px;top:903.5px">DEPENDENCIES</div>
<svg class="a" style="left:352px;top:15.5px" width="15" height="14" viewBox="0 0 15 14"><path d="M1.5 7.2L7.5 1.5L13.5 7.2M3.2 6V12.8H11.8V6" stroke="#7d7a76" stroke-width="1.3" fill="none" stroke-linejoin="round"/><rect x="6.3" y="9" width="2.4" height="3.8" fill="#7d7a76"/><path d="M11 2.5V5" stroke="#7d7a76" stroke-width="1.2"/></svg>
<svg class="a" style="left:385.5px;top:16px" width="17" height="14" viewBox="0 0 17 14"><rect x="1" y="1" width="10.5" height="8.5" rx="1.8" stroke="#7d7a76" stroke-width="1.2" fill="none"/><rect x="4" y="4" width="12" height="9" rx="1.8" stroke="#7d7a76" stroke-width="1.2" fill="#3f3c39"/><circle cx="10" cy="8.6" r="2" stroke="#7d7a76" stroke-width="1.2" fill="none"/><path d="M8 4V3H11.5V4" stroke="#7d7a76" stroke-width="1"/></svg>
<svg class="a" style="left:418.5px;top:15px" width="15" height="15" viewBox="0 0 15 15"><rect x="3.8" y="5" width="9" height="9" rx="1.8" stroke="#7d7a76" stroke-width="1.3" fill="none"/><path d="M1.3 5.5A4 4 0 0 1 5 1.6" stroke="#7d7a76" stroke-width="1" fill="none"/><path d="M5 0.3L7 1.7L5 3Z" fill="#7d7a76"/></svg>
<svg class="a" style="left:489px;top:31px" width="13" height="13" viewBox="0 0 13 13"><path d="M4.5 1.5H8.3L11 4.2V9.5A1.3 1.3 0 0 1 9.7 10.8H5.8A1.3 1.3 0 0 1 4.5 9.5Z" stroke="#c4c6cb" stroke-width="1.1" fill="none"/><path d="M4.5 3.8H3.2A1.3 1.3 0 0 0 1.9 5.1V11.3A1.3 1.3 0 0 0 3.2 12.6H7.6A1.3 1.3 0 0 0 8.9 11.3V10.8" stroke="#c4c6cb" stroke-width="1.1" fill="none"/></svg>
<svg class="a" style="left:512px;top:31px" width="13" height="13" viewBox="0 0 13 13"><circle cx="7.8" cy="5" r="3.7" stroke="#aeb1b7" stroke-width="1.1" fill="none"/><path d="M5.2 7.7L1.2 11.8" stroke="#aeb1b7" stroke-width="1.2"/></svg>
<svg class="a" style="left:535px;top:31px" width="12" height="13" viewBox="0 0 12 13"><circle cx="3" cy="2.3" r="1.4" stroke="#aeb1b7" stroke-width="1" fill="none"/><circle cx="3" cy="10.7" r="1.4" stroke="#aeb1b7" stroke-width="1" fill="none"/><circle cx="9" cy="4.2" r="1.4" stroke="#aeb1b7" stroke-width="1" fill="none"/><path d="M3 3.7V9.3M9 5.6C9 8 3 7.5 3 9.3" stroke="#aeb1b7" stroke-width="1" fill="none"/></svg>
<svg class="a" style="left:559.5px;top:34.5px" width="9" height="6" viewBox="0 0 9 6"><path d="M0.8 0.8L4.5 4.5L8.2 0.8" stroke="#aeb1b7" stroke-width="1.1" fill="none"/></svg>
<svg class="a" style="left:469px;top:55px" width="8" height="6" viewBox="0 0 8 6"><path d="M0.8 0.8L4 4L7.2 0.8" stroke="#aeb1b7" stroke-width="1.1" fill="none"/></svg>
<svg class="a" style="left:472px;top:857px" width="5" height="8" viewBox="0 0 5 8"><path d="M0.8 0.8L4 4L0.8 7.2" stroke="#aeb1b7" stroke-width="1.1" fill="none"/></svg>
<svg class="a" style="left:472px;top:872.5px" width="5" height="8" viewBox="0 0 5 8"><path d="M0.8 0.8L4 4L0.8 7.2" stroke="#aeb1b7" stroke-width="1.1" fill="none"/></svg>
<svg class="a" style="left:472px;top:888px" width="5" height="8" viewBox="0 0 5 8"><path d="M0.8 0.8L4 4L0.8 7.2" stroke="#aeb1b7" stroke-width="1.1" fill="none"/></svg>
<svg class="a" style="left:472px;top:903.5px" width="5" height="8" viewBox="0 0 5 8"><path d="M0.8 0.8L4 4L0.8 7.2" stroke="#aeb1b7" stroke-width="1.1" fill="none"/></svg>
<svg class="a" style="left:1415.5px;top:9.5px" width="12" height="11" viewBox="0 0 12 11"><rect x="0.8" y="0.8" width="10.4" height="9.4" rx="1.8" stroke="#9fa2ab" stroke-width="1.2" fill="none"/><rect x="1.2" y="1.2" width="3.4" height="8.6" fill="#bfc2d2"/></svg>
<svg class="a" style="left:1434.5px;top:9.5px" width="12" height="11" viewBox="0 0 12 11"><rect x="0.8" y="0.8" width="10.4" height="9.4" rx="1.8" stroke="#9fa2ab" stroke-width="1.2" fill="none"/><path d="M1 7H11" stroke="#9fa2ab" stroke-width="1.2"/></svg>
<svg class="a" style="left:1453px;top:9.5px" width="12" height="11" viewBox="0 0 12 11"><rect x="0.8" y="0.8" width="10.4" height="9.4" rx="1.8" stroke="#9fa2ab" stroke-width="1.2" fill="none"/><path d="M7 1V10" stroke="#9fa2ab" stroke-width="1.2"/></svg>
<svg class="a" style="left:1471px;top:9px" width="12" height="12" viewBox="0 0 12 12"><path d="M6 0.8L7.3 2.2L9.3 1.9L9.6 3.9L11.2 5.1L10.3 6.9L11.2 8.7L9.6 9.9L9.3 11.9L7.3 11.6L6 13L4.7 11.6L2.7 11.9L2.4 9.9L0.8 8.7L1.7 6.9L0.8 5.1L2.4 3.9L2.7 1.9L4.7 2.2Z" transform="translate(0,-0.9)" stroke="#9fa2ab" stroke-width="1.1" fill="none"/><circle cx="6" cy="6" r="1.6" stroke="#9fa2ab" stroke-width="1" fill="none"/></svg>
<svg class="a" style="left:1453.5px;top:32.5px" width="11" height="11" viewBox="0 0 11 11"><rect x="0.8" y="0.8" width="9.4" height="9.4" rx="1.6" stroke="#9fa2ab" stroke-width="1.2" fill="none"/><path d="M5.5 1V10" stroke="#9fa2ab" stroke-width="1.2"/></svg>
<div class="a" style="left:1472.7px;top:37px;width:1.6px;height:1.6px;background:#9fa2ab"></div>
<div class="a" style="left:1476.2px;top:37px;width:1.6px;height:1.6px;background:#9fa2ab"></div>
<div class="a" style="left:1479.8px;top:37px;width:1.6px;height:1.6px;background:#9fa2ab"></div>
<div class="a" style="left:1246.6px;top:19.3px;width:1.5px;height:1.5px;background:#8d9097"></div>
<div class="a" style="left:1249.8px;top:19.3px;width:1.5px;height:1.5px;background:#8d9097"></div>
<div class="a" style="left:1246.6px;top:22.5px;width:1.5px;height:1.5px;background:#8d9097"></div>
<div class="a" style="left:1249.8px;top:22.5px;width:1.5px;height:1.5px;background:#8d9097"></div>
<div class="a" style="left:1246.6px;top:25.700000000000003px;width:1.5px;height:1.5px;background:#8d9097"></div>
<div class="a" style="left:1249.8px;top:25.700000000000003px;width:1.5px;height:1.5px;background:#8d9097"></div>
<div class="a" style="left:1258.8px;top:18.6px;width:1.9px;height:8.4px;background:#6aa3de"></div><div class="a" style="left:1263.3px;top:18.6px;width:1.9px;height:8.4px;background:#6aa3de"></div>
<svg class="a" style="left:1275px;top:18px" width="12" height="11" viewBox="0 0 12 11"><path d="M1.5 5.5A4.8 4.8 0 0 1 10 4" stroke="#8d9097" stroke-width="1.3" fill="none"/><path d="M10.8 1.2V5H7.3Z" fill="#8d9097"/><circle cx="5.6" cy="9" r="1.4" fill="#8d9097"/></svg>
<svg class="a" style="left:1294px;top:17.5px" width="11" height="12" viewBox="0 0 11 12"><path d="M5.5 0.5V6.5M2.6 4L5.5 6.8L8.4 4" stroke="#8d9097" stroke-width="1.2" fill="none"/><circle cx="5.5" cy="9.8" r="1.4" fill="#8d9097"/></svg>
<svg class="a" style="left:1312.5px;top:17.5px" width="11" height="12" viewBox="0 0 11 12"><path d="M5.5 7V1.2M2.6 3.9L5.5 1L8.4 3.9" stroke="#8d9097" stroke-width="1.2" fill="none"/><circle cx="5.5" cy="9.8" r="1.4" fill="#8d9097"/></svg>
<svg class="a" style="left:1331.5px;top:17px" width="9" height="12" viewBox="0 0 9 12"><path d="M5.6 0.5L1.2 7H4.3L3.4 11.5L7.8 5H4.7Z" fill="#f0a830"/></svg>
<svg class="a" style="left:1349.5px;top:17px" width="11" height="12" viewBox="0 0 11 12"><path d="M2.2 3.4A4.3 4.3 0 1 0 5.5 1.8" stroke="#7ec47d" stroke-width="1.4" fill="none"/><path d="M1 1V4.8H4.8" stroke="#7ec47d" stroke-width="1.3" fill="none"/></svg>
<svg class="a" style="left:1368.5px;top:18px" width="10" height="10" viewBox="0 0 10 10"><rect x="0.9" y="0.9" width="8.2" height="8.2" rx="1" stroke="#e8836b" stroke-width="1.3" fill="none"/></svg>
<svg class="a" style="left:1386.5px;top:17.5px" width="11" height="11" viewBox="0 0 11 11"><path d="M0.8 3.3V0.8H3.3M7.7 0.8H10.2V3.3M10.2 7.7V10.2H7.7M3.3 10.2H0.8V7.7" stroke="#64b5d4" stroke-width="1.2" fill="none"/><circle cx="5" cy="5" r="2" stroke="#64b5d4" stroke-width="1.1" fill="none"/><path d="M6.4 6.4L8 8" stroke="#64b5d4" stroke-width="1.1"/></svg>
<svg class="a" style="left:599px;top:33px" width="8" height="9" viewBox="0 0 8 9"><path d="M0.5 1.2H7M0.5 3.4H5.5M0.5 5.6H7M0.5 7.8H5.5" stroke="#9ea1a8" stroke-width="0.8"/></svg>
<svg class="a" style="left:600px;top:56px" width="10" height="11" viewBox="0 0 10 11"><path d="M3.3 4.2V9.2L4.6 8L5.6 10.2L6.7 9.7L5.7 7.5H7.6Z" fill="#c9cbcf"/><path d="M3.5 0.3V2M0.3 3.5H2M1.3 1.3L2.3 2.3M5.7 1.3L4.7 2.3M6.8 3.5H5.2" stroke="#c9cbcf" stroke-width="0.9"/></svg>
<svg class="a" style="left:718px;top:57.5px" width="10" height="8" viewBox="0 0 10 8"><path d="M3.3 0.8L0.8 4L3.3 7.2M6.7 0.8L9.2 4L6.7 7.2" stroke="#b9c8f5" stroke-width="1.2" fill="none"/></svg>
<svg class="a" style="left:970px;top:56px" width="10" height="11" viewBox="0 0 10 11"><circle cx="5" cy="6.3" r="3.9" stroke="#b9c8f5" stroke-width="1.1" fill="none"/><path d="M5 6.3V4.2M3.6 0.9H6.4M5 1V2.3M8.2 2.6L8.9 3.3" stroke="#b9c8f5" stroke-width="1.1"/></svg>
<svg class="a" style="left:1070.5px;top:57.5px" width="11" height="8" viewBox="0 0 11 8"><path d="M0.8 0.5V7.5M10.2 0.5V7.5M2.2 4H8.8" stroke="#d0d2d6" stroke-width="1.2"/><path d="M2 4L3.8 2.7V5.3Z M9 4L7.2 2.7V5.3Z" fill="#d0d2d6"/></svg>
<svg class="a" style="left:1169.5px;top:57px" width="12" height="9" viewBox="0 0 12 9"><path d="M0.6 8L2.8 1.5L5 8M1.3 6H4.3M6.4 5.5L8.3 0.8L10.2 5.5M6.9 4.2H9.7" stroke="#b9c8f5" stroke-width="0.9" fill="none"/><path d="M0.5 8.5H11.5" stroke="#b9c8f5" stroke-width="0.6"/></svg>
<svg class="a" style="left:1266.5px;top:56.5px" width="10" height="10" viewBox="0 0 10 10"><path d="M1 9L5.5 4.5" stroke="#c9cbcf" stroke-width="1.6"/><path d="M8.8 3.2A2.4 2.4 0 1 0 8.8 6.8" stroke="#c9cbcf" stroke-width="1.1" fill="none"/><path d="M6.5 0.8L8 2" stroke="#c9cbcf" stroke-width="1"/></svg>
<svg class="a" style="left:1373px;top:56.5px" width="9" height="10" viewBox="0 0 9 10"><rect x="0.5" y="0.8" width="8" height="8.4" rx="1" fill="#d0d2d6"/><rect x="2.5" y="5.5" width="4" height="1.6" fill="#23262d"/></svg>
<svg class="a" style="left:858.5px;top:83px" width="11" height="11" viewBox="0 0 11 11"><circle cx="4.3" cy="4.3" r="3" stroke="#c9cbcf" stroke-width="1.4" fill="none"/><path d="M6.5 6.5L9.8 9.8" stroke="#c9cbcf" stroke-width="1.8"/></svg>
<svg class="a" style="left:872px;top:83px" width="11" height="11" viewBox="0 0 11 11"><path d="M8.8 4A4 4 0 1 0 9 6.6" stroke="#c9cbcf" stroke-width="1.5" fill="none"/><path d="M10.3 0.6V4.8H6.1Z" fill="#c9cbcf"/></svg>
<div class="a" style="left:886.5px;top:480px;width:1.3px;height:11.5px;background:#3c3f47;border-radius:1px"></div><div class="a" style="left:889.5px;top:480px;width:1.3px;height:11.5px;background:#3c3f47;border-radius:1px"></div>
<svg class="a" style="left:596.5px;top:900px" width="10" height="10" viewBox="0 0 10 10"><rect x="0.5" y="1.5" width="8.5" height="8" rx="1.5" fill="#d6d8dc"/><path d="M2 0.5H9.5V8" stroke="#d6d8dc" stroke-width="0.9" fill="none"/><path d="M5.5 4.5L7.5 6.5H5.5Z" fill="#555"/></svg>
<svg class="a" style="left:666px;top:900px" width="11" height="11" viewBox="0 0 11 11"><rect x="0.8" y="1" width="9.4" height="7.2" rx="1.6" stroke="#d6d8dc" stroke-width="1.3" fill="none"/><path d="M4.2 3V6.2L6.8 4.6Z" fill="#d6d8dc"/><path d="M3 10H8" stroke="#d6d8dc" stroke-width="1.1"/></svg>
<div class="a" style="left:654px;top:905.3px;width:2px;height:2px;border-radius:50%;background:#8d9097"></div>
<div class="a" style="left:863.5px;top:905.3px;width:2px;height:2px;border-radius:50%;background:#8d9097"></div>
<div class="a" style="left:1214.5px;top:905.3px;width:2px;height:2px;border-radius:50%;background:#8d9097"></div>
<svg class="a" style="left:1359px;top:900.5px" width="12" height="12" viewBox="0 0 12 12"><path d="M6 0.8L7.3 2.2L9.3 1.9L9.6 3.9L11.2 5.1L10.3 6.9L11.2 8.7L9.6 9.9L9.3 11.9L7.3 11.6L6 13L4.7 11.6L2.7 11.9L2.4 9.9L0.8 8.7L1.7 6.9L0.8 5.1L2.4 3.9L2.7 1.9L4.7 2.2Z" transform="translate(0,-0.9)" stroke="#c5c7cb" stroke-width="1.3" fill="none"/><circle cx="6" cy="6" r="1.6" stroke="#c5c7cb" stroke-width="1.1" fill="none"/></svg>
<svg class="a" style="left:1393px;top:900px" width="12" height="13" viewBox="0 0 12 13"><path d="M3.5 1.2H8.5L9 3L11 4.2L10.3 6.5L11 8.8L9 9.8V11.8H3L2.9 9.8L1 8.8L1.7 6.5L1 4.2L3 3Z" stroke="#c5c7cb" stroke-width="1.2" fill="none"/><path d="M4 7.5L6 5.5L8 7.5V10H4Z" fill="#c5c7cb"/></svg>
<svg class="a" style="left:1427.5px;top:900px" width="11" height="13" viewBox="0 0 11 13"><path d="M2.5 3.5H8.5V9A3 3 0 0 1 2.5 9Z" stroke="#c5c7cb" stroke-width="1.3" fill="none"/><path d="M1.5 1L3.5 3.5M9.5 1L7.5 3.5M5.5 5.5V9" stroke="#c5c7cb" stroke-width="1.2"/></svg>
<svg class="a" style="left:1462px;top:900.5px" width="12" height="12" viewBox="0 0 12 12"><circle cx="6" cy="6" r="5" stroke="#c5c7cb" stroke-width="1.3" fill="none"/><path d="M4.3 4.7A1.8 1.8 0 1 1 6.5 6.3C6 6.6 6 7 6 7.5" stroke="#c5c7cb" stroke-width="1.2" fill="none"/><circle cx="6" cy="9" r="0.8" fill="#c5c7cb"/></svg>
<svg class="a" style="left:472.5px;top:919.5px" width="12" height="9" viewBox="0 0 12 9"><path d="M1.5 7L4.5 4L1.5 1M10.5 2L7.5 5L10.5 8" stroke="#fff" stroke-width="1.1" fill="none"/></svg>
<svg class="a" style="left:495px;top:918.5px" width="9" height="11" viewBox="0 0 9 11"><circle cx="2.2" cy="1.8" r="1.2" stroke="#a9acb3" stroke-width="0.9" fill="none"/><circle cx="2.2" cy="9.2" r="1.2" stroke="#a9acb3" stroke-width="0.9" fill="none"/><circle cx="7" cy="3.2" r="1.2" stroke="#a9acb3" stroke-width="0.9" fill="none"/><path d="M2.2 3V8M7 4.4C7 6.5 2.2 6 2.2 8" stroke="#a9acb3" stroke-width="0.9" fill="none"/></svg>
<div class="vt" style="left:507px;top:919.3px;font-size:9.25px;color:#a9acb3;">stable*</div>
<svg class="a" style="left:539.5px;top:918.5px" width="11" height="11" viewBox="0 0 11 11"><path d="M1.5 4.5A4 4 0 0 1 9 3.5M9.5 6.5A4 4 0 0 1 2 7.5" stroke="#a9acb3" stroke-width="1" fill="none"/><path d="M9.8 1.5V4.3H7Z M1.2 9.5V6.7H4Z" fill="#a9acb3"/></svg>
<div class="vt" style="left:552.8px;top:919.3px;font-size:9.3px;color:#a9acb3;">40998</div>
<svg class="a" style="left:579.5px;top:918.5px" width="7" height="10" viewBox="0 0 7 10"><path d="M3.5 0.8V8.8M0.8 6L3.5 8.8L6.2 6" stroke="#a9acb3" stroke-width="1.1" fill="none"/></svg>
<div class="vt" style="left:588.5px;top:919.3px;font-size:9.3px;color:#a9acb3;">26</div>
<svg class="a" style="left:599.5px;top:918.5px" width="7" height="10" viewBox="0 0 7 10"><path d="M3.5 9.2V1.2M0.8 4L3.5 1.2L6.2 4" stroke="#a9acb3" stroke-width="1.1" fill="none"/></svg>
<svg class="a" style="left:616px;top:918.5px" width="10" height="11" viewBox="0 0 10 11"><circle cx="3" cy="2" r="1.3" stroke="#a9acb3" stroke-width="0.9" fill="none"/><circle cx="7" cy="9" r="1.3" stroke="#a9acb3" stroke-width="0.9" fill="none"/><path d="M3 3.3V10M3 6C5 6 7 5 7 7.7M5 1.5H8V4" stroke="#a9acb3" stroke-width="0.9" fill="none"/></svg>
<svg class="a" style="left:636px;top:918px" width="22" height="12" viewBox="0 0 22 12"><path d="M2 10L4 6.5C5 3 8 1.2 10.3 1C10 3.5 8.5 6 5.5 7.5Z M3 8.5L1 8L3 6M5.5 9.8L6 11.5L4 10" stroke="#a9acb3" stroke-width="0.9" fill="none"/><path d="M13 10.5L15 8.5M14 6.8L16 4.8A1.6 1.6 0 0 1 18.3 7.1L16.3 9.1M15 8.5L17 6.5M13 6.8L11 8.8A1.6 1.6 0 0 0 13.3 11.1L15.3 9.1" stroke="#a9acb3" stroke-width="0.9" fill="none"/></svg>
<div class="vt" style="left:660px;top:919.3px;font-size:8.9px;color:#a9acb3;">Launchpad</div>
<svg class="a" style="left:716px;top:918.5px" width="11" height="11" viewBox="0 0 11 11"><circle cx="5.5" cy="5.5" r="4.5" stroke="#a9acb3" stroke-width="0.9" fill="none"/><path d="M3.7 3.7L7.3 7.3M7.3 3.7L3.7 7.3" stroke="#a9acb3" stroke-width="0.9"/></svg>
<div class="vt" style="left:728.5px;top:919.3px;font-size:9.2px;color:#a9acb3;">0</div>
<svg class="a" style="left:735.5px;top:918px" width="12" height="11" viewBox="0 0 12 11"><path d="M6 1L11 10H1Z" stroke="#a9acb3" stroke-width="0.9" fill="none"/><path d="M6 4V7M6 8V9" stroke="#a9acb3" stroke-width="0.9"/></svg>
<div class="vt" style="left:748.5px;top:919.3px;font-size:9.2px;color:#a9acb3;">1</div>
<svg class="a" style="left:755.5px;top:918.5px" width="11" height="11" viewBox="0 0 11 11"><circle cx="5.5" cy="5.5" r="4.5" stroke="#a9acb3" stroke-width="0.9" fill="none"/><path d="M5.5 4.5V8M5.5 2.8V3.6" stroke="#a9acb3" stroke-width="0.9"/></svg>
<div class="vt" style="left:768.5px;top:919.3px;font-size:9.2px;color:#a9acb3;">1</div>
<svg class="a" style="left:784px;top:918.5px" width="12" height="11" viewBox="0 0 12 11"><path d="M6 4V10.5M4 10.5L6 4L8 10.5M2 1.5A5 5 0 0 0 2 7M10 1.5A5 5 0 0 1 10 7M3.8 3A2.5 2.5 0 0 0 3.8 5.5M8.2 3A2.5 2.5 0 0 1 8.2 5.5" stroke="#a9acb3" stroke-width="0.9" fill="none"/></svg>
<div class="vt" style="left:797px;top:919.3px;font-size:9.2px;color:#a9acb3;">0</div>
<svg class="a" style="left:813px;top:918.5px" width="13" height="12" viewBox="0 0 13 12"><path d="M4 1.5L11.5 6L4 10.5" stroke="#a9acb3" stroke-width="0.9" fill="none"/><rect x="1" y="6.5" width="4.5" height="4.5" stroke="#a9acb3" stroke-width="0.9" fill="#1d1f26"/></svg>
<div class="vt" style="left:836px;top:919.3px;font-size:9.08px;color:#a9acb3;">Debug my code</div>
<svg class="a" style="left:1251px;top:918.5px" width="10" height="11" viewBox="0 0 10 11"><circle cx="5" cy="4.8" r="4.2" fill="#8d9097"/><circle cx="5" cy="4.8" r="1.3" fill="#1d1f26"/><rect x="4.3" y="5" width="1.4" height="5.5" fill="#c9cbcf"/></svg>
<div class="vt" style="left:1263px;top:919.3px;font-size:8.71px;color:#a9acb3;">Go Live</div>
<div class="vt" style="left:1304.7px;top:919.3px;font-size:9.03px;color:#a9acb3;">Cursor Tab</div>
<div class="vt" style="left:1360px;top:919.3px;font-size:9.13px;color:#a9acb3;">iPhone 15 (ios simulator)</div>
<svg class="a" style="left:1473px;top:918px" width="11" height="12" viewBox="0 0 11 12"><path d="M2 8.5V5.5A3.5 3.5 0 0 1 6.5 2.2M9 5V8.5L10 9.5H1L2 8.5M4.3 10.5A1.3 1.3 0 0 0 6.7 10.5" stroke="#a9acb3" stroke-width="0.9" fill="none"/><circle cx="8.5" cy="2.5" r="1.7" fill="#b9c0d6"/></svg>
</div></body></html>
